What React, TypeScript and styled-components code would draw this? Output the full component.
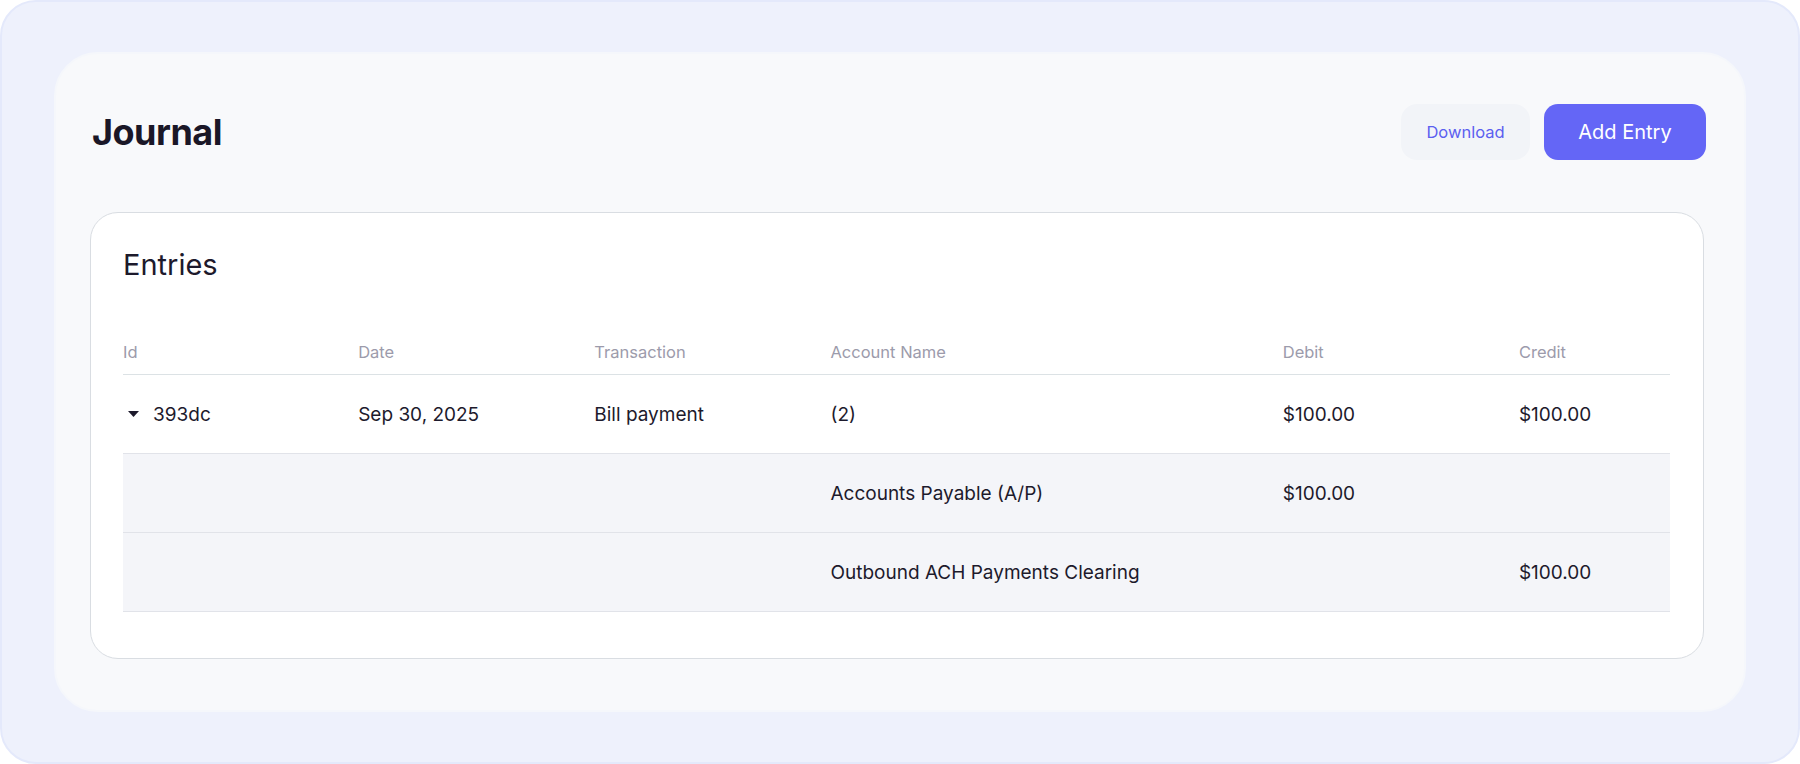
import React from 'react';
import styled, {createGlobalStyle} from 'styled-components';

const GlobalStyle = createGlobalStyle`
    html, body {
        margin: 0;
        padding: 0;
        background: #ffffff;
    }
    body {
        font-family: Inter, 'Noto Sans', sans-serif;
        color: #1d1a2c;
    }
    * {
        box-sizing: border-box;
    }
`;

const Frame = styled.div`
    width: 1800px;
    height: 764px;
    background: #eef1fc;
    border: 2px solid #e4e9fb;
    border-radius: 36px;
    padding: 50px 52px;
`;

const Panel = styled.div`
    height: 100%;
    background: #f8f9fb;
    border: 2px solid #f5f7fb;
    border-radius: 44px;
    padding: 50px 38px 0 36px;
`;

const Header = styled.div`
    display: flex;
    align-items: center;
    justify-content: space-between;
    height: 56px;
`;

const Title = styled.h1`
    margin: 0;
    font-size: 36px;
    font-weight: 700;
    letter-spacing: -0.5px;
    color: #1a1727;
`;

const Actions = styled.div`
    display: flex;
    gap: 14px;
`;

const Button = styled.button<{$primary?: boolean}>`
    height: 56px;
    border: none;
    outline: none;
    cursor: pointer;
    font-family: Inter, 'Noto Sans', sans-serif;
    border-radius: ${(p) => (p.$primary ? '14px' : '16px')};
    width: ${(p) => (p.$primary ? '162px' : '129px')};
    background: ${(p) => (p.$primary ? '#6466f6' : '#f2f4f8')};
    color: ${(p) => (p.$primary ? '#ffffff' : '#5c5ff0')};
    font-size: ${(p) => (p.$primary ? '20px' : '16.5px')};
`;

const Card = styled.div`
    margin: 52px 2px 0 -2px;
    background: #ffffff;
    border: 1px solid #d9dde2;
    border-radius: 28px;
    padding: 32px 33px 46px 32px;
`;

const CardTitle = styled.h2`
    margin: 0;
    height: 40px;
    line-height: 40px;
    font-size: 29px;
    font-weight: 400;
    color: #1d1a2c;
`;

const Table = styled.div`
    margin-top: 45px;
`;

const Row = styled.div<{$head?: boolean; $sub?: boolean}>`
    display: grid;
    grid-template-columns: 235fr 236fr 236fr 452fr 236fr 151fr;
    align-items: center;
    height: ${(p) => (p.$head ? '45px' : '79px')};
    border-bottom: 1px solid ${(p) => (p.$head ? '#dce2e5' : '#e1e3e9')};
    background: ${(p) => (p.$sub ? '#f4f5f9' : 'transparent')};
`;

const HeadCell = styled.div`
    font-size: 16.5px;
    color: #9c9bab;
`;

const Cell = styled.div`
    font-size: 19px;
    color: #1d1a2c;
    display: flex;
    align-items: center;
`;

const Caret = styled.span`
    width: 20px;
    height: 20px;
    margin-right: 10px;
    display: inline-flex;
    align-items: center;
    justify-content: center;
`;

type Line = {account: string; debit?: string; credit?: string};

const lines: Line[] = [
    {account: 'Accounts Payable (A/P)', debit: '$100.00'},
    {account: 'Outbound ACH Payments Clearing', credit: '$100.00'},
];

export default function App() {
    return (
        <>
            <GlobalStyle />
            <Frame>
                <Panel>
                    <Header>
                        <Title>Journal</Title>
                        <Actions>
                            <Button>Download</Button>
                            <Button $primary>Add Entry</Button>
                        </Actions>
                    </Header>
                    <Card>
                        <CardTitle>Entries</CardTitle>
                        <Table>
                            <Row $head>
                                <HeadCell>Id</HeadCell>
                                <HeadCell>Date</HeadCell>
                                <HeadCell>Transaction</HeadCell>
                                <HeadCell>Account Name</HeadCell>
                                <HeadCell>Debit</HeadCell>
                                <HeadCell>Credit</HeadCell>
                            </Row>
                            <Row>
                                <Cell>
                                    <Caret>
                                        <svg width='11' height='6' viewBox='0 0 11 6'>
                                            <path d='M0 0 L11 0 L5.5 6 Z' fill='#1d1a2c' />
                                        </svg>
                                    </Caret>
                                    393dc
                                </Cell>
                                <Cell>Sep 30, 2025</Cell>
                                <Cell>Bill payment</Cell>
                                <Cell>(2)</Cell>
                                <Cell>$100.00</Cell>
                                <Cell>$100.00</Cell>
                            </Row>
                            {lines.map((l) => (
                                <Row $sub key={l.account}>
                                    <Cell />
                                    <Cell />
                                    <Cell />
                                    <Cell>{l.account}</Cell>
                                    <Cell>{l.debit}</Cell>
                                    <Cell>{l.credit}</Cell>
                                </Row>
                            ))}
                        </Table>
                    </Card>
                </Panel>
            </Frame>
        </>
    );
}
